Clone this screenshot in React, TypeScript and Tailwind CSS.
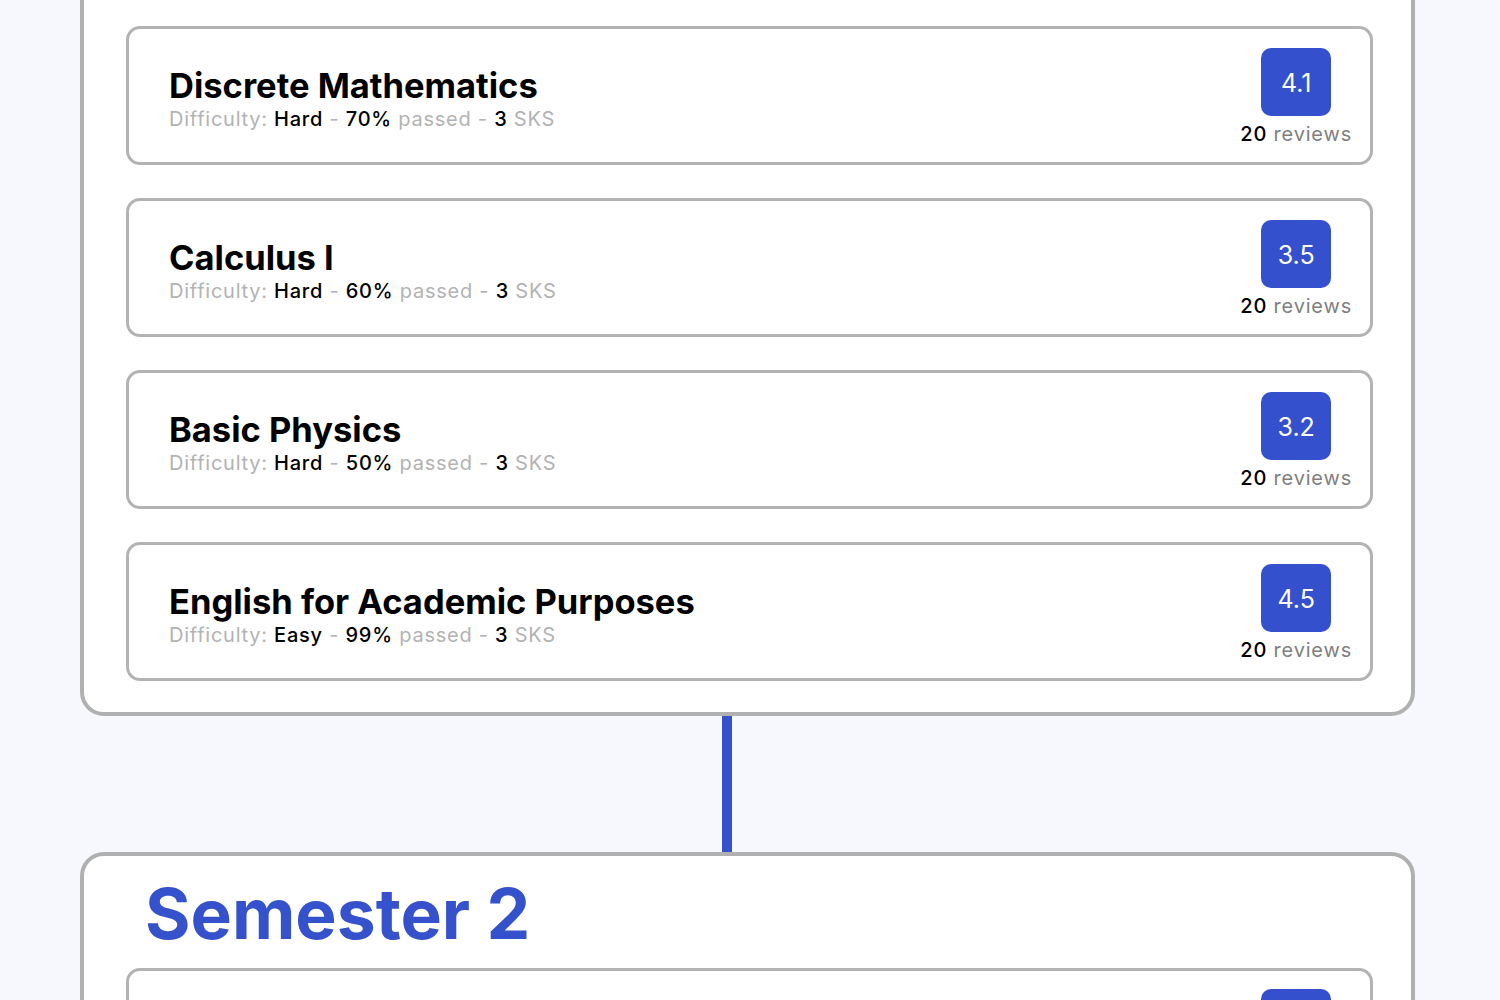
type Course = {
  name: string;
  difficulty: string;
  passed: number;
  sks: number;
  rating: string;
  reviews: number;
};

const semester1: Course[] = [
  { name: "Discrete Mathematics", difficulty: "Hard", passed: 70, sks: 3, rating: "4.1", reviews: 20 },
  { name: "Calculus I", difficulty: "Hard", passed: 60, sks: 3, rating: "3.5", reviews: 20 },
  { name: "Basic Physics", difficulty: "Hard", passed: 50, sks: 3, rating: "3.2", reviews: 20 },
  { name: "English for Academic Purposes", difficulty: "Easy", passed: 99, sks: 3, rating: "4.5", reviews: 20 },
];

const semester2: Course[] = [
  { name: "Data Structures", difficulty: "Hard", passed: 65, sks: 3, rating: "4.0", reviews: 20 },
];

function CourseCard({ course }: { course: Course }) {
  return (
    <div className="h-[139px] shrink-0 border-[3px] border-[#b3b3b3] rounded-[14px] bg-white pl-[40px] pr-[18px] flex items-center justify-between">
      <div className="flex flex-col pt-[4px]">
        <h3 className="text-[34.5px] leading-[42px] font-bold text-black">{course.name}</h3>
        <p className="text-[20px] leading-[24px] text-[#b3b3b3] tracking-[0.75px]">
          Difficulty: <span className="text-black font-medium">{course.difficulty}</span> -{" "}
          <span className="text-black font-medium">{course.passed}%</span> passed -{" "}
          <span className="text-black font-medium">{course.sks}</span> SKS
        </p>
      </div>
      <div className="flex flex-col items-center pt-[2px]">
        <div className="w-[70px] h-[68px] rounded-[10px] bg-[#3550cc] flex items-center justify-center pt-[4px] text-white text-[25px]">
          {course.rating}
        </div>
        <p className="mt-[6px] text-[20px] leading-[24px] text-[#7f7f7f] tracking-[0.8px]">
          <span className="text-black font-medium">{course.reviews}</span> reviews
        </p>
      </div>
    </div>
  );
}

export default function App() {
  return (
    <div
      className="w-[1500px] h-[1000px] overflow-hidden bg-[#f6f8fd]"
      style={{ fontFamily: "Inter, 'Noto Sans', sans-serif" }}
    >
      <div className="ml-[80px] w-[1335px] flex flex-col">
        {/* semester 1 - scrolled, top is off screen */}
        <div className="-mt-[40px] border-4 border-[#b0b0b0] rounded-[24px] bg-white pt-[62px] pb-[31px] pl-[42px] pr-[38px] flex flex-col gap-[33px]">
          {semester1.map((c) => (
            <CourseCard key={c.name} course={c} />
          ))}
        </div>

        <div className="ml-[642px] w-[10px] h-[136px] bg-[#3550cc]" />

        <div className="border-4 border-[#b0b0b0] rounded-[24px] bg-white pl-[42px] pr-[38px] pb-[31px] flex flex-col">
          <h2 className="pl-[19px] pt-[24px] mb-[18px] text-[69.5px] leading-none font-bold text-[#3552cc]">
            Semester 2
          </h2>
          <div className="flex flex-col gap-[33px]">
            {semester2.map((c) => (
              <CourseCard key={c.name} course={c} />
            ))}
          </div>
        </div>
      </div>
    </div>
  );
}
